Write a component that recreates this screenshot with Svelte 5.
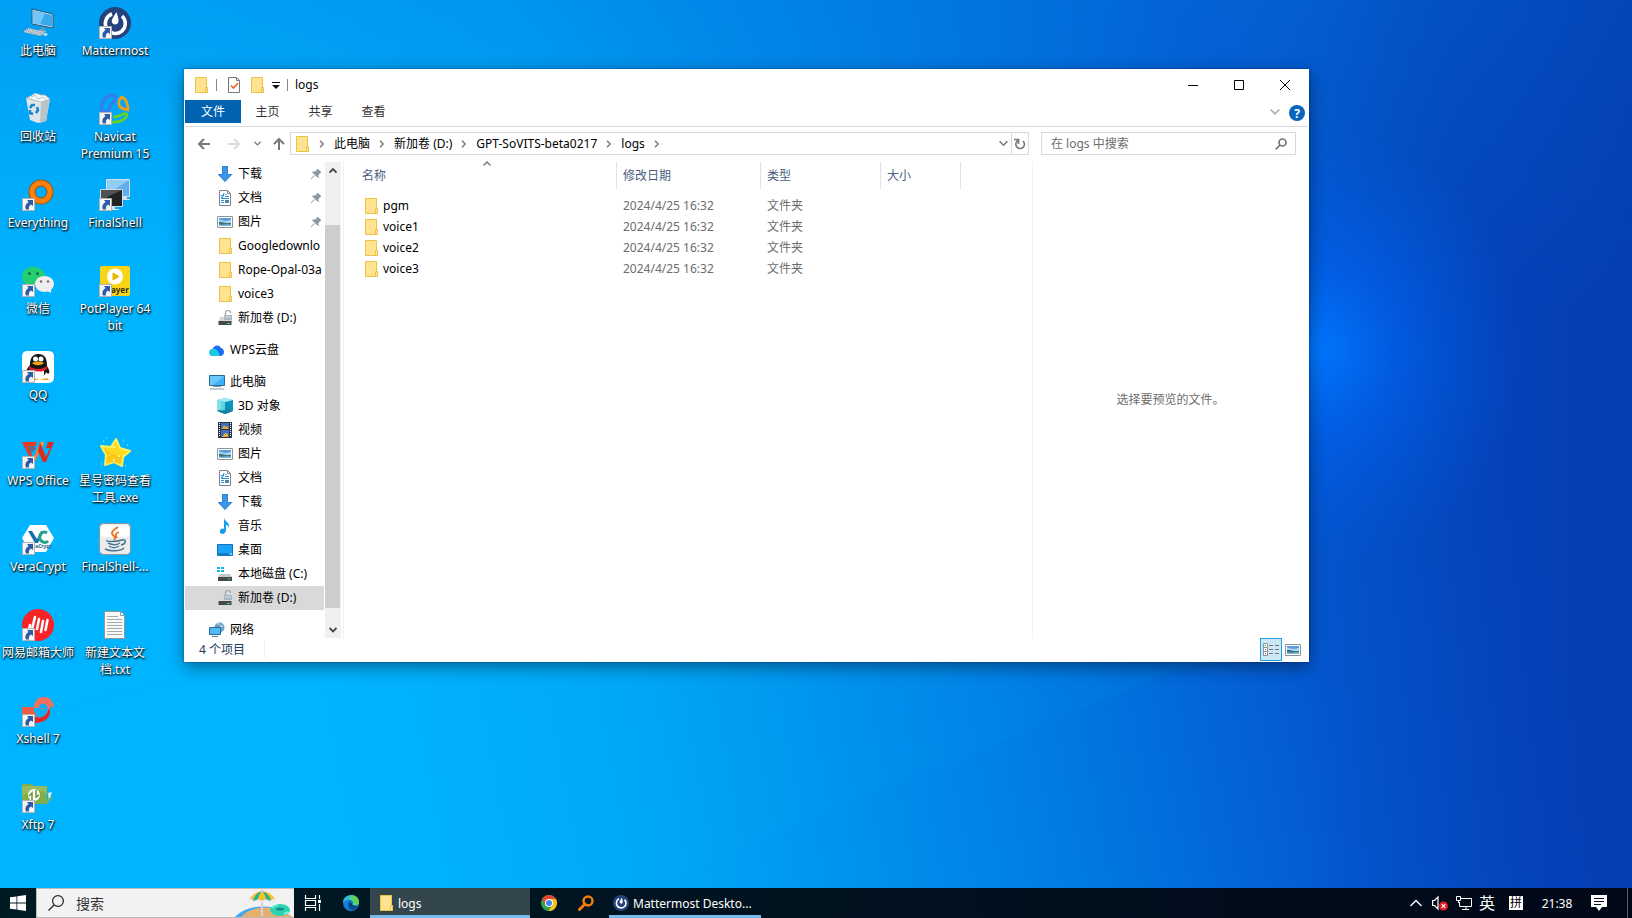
<script>
  const desktopColumns = [
    [
      { icon: 'pc', label: '此电脑' },
      { icon: 'bin', label: '回收站' },
      { icon: 'everything', label: 'Everything', link: true },
      { icon: 'wechat', label: '微信', link: true },
      { icon: 'qq', label: 'QQ', link: true },
      { icon: 'wps', label: 'WPS Office', link: true },
      { icon: 'vera', label: 'VeraCrypt', link: true },
      { icon: 'mail', label: '网易邮箱大师', link: true },
      { icon: 'xshell', label: 'Xshell 7', link: true },
      { icon: 'xftp', label: 'Xftp 7', link: true }
    ],
    [
      { icon: 'mattermost', label: 'Mattermost', link: true },
      { icon: 'navicat', label: 'Navicat Premium 15', link: true },
      { icon: 'finalshell', label: 'FinalShell', link: true },
      { icon: 'potplayer', label: 'PotPlayer 64 bit', link: true },
      null,
      { icon: 'star', label: '星号密码查看工具.exe' },
      { icon: 'java', label: 'FinalShell-...' },
      { icon: 'text', label: '新建文本文档.txt' }
    ]
  ];

  const navGroups = [
    [
      { icon: 'download', label: '下载', pin: true },
      { icon: 'document', label: '文档', pin: true },
      { icon: 'picture', label: '图片', pin: true },
      { icon: 'folder', label: 'Googledownlo' },
      { icon: 'folder', label: 'Rope-Opal-03a' },
      { icon: 'folder', label: 'voice3' },
      { icon: 'lockdrive', label: '新加卷 (D:)' }
    ],
    [{ icon: 'cloud', label: 'WPS云盘', root: true }],
    [
      { icon: 'monitor', label: '此电脑', root: true },
      { icon: 'cube', label: '3D 对象' },
      { icon: 'film', label: '视频' },
      { icon: 'picture', label: '图片' },
      { icon: 'document', label: '文档' },
      { icon: 'download', label: '下载' },
      { icon: 'music', label: '音乐' },
      { icon: 'desktop', label: '桌面' },
      { icon: 'drive', label: '本地磁盘 (C:)' },
      { icon: 'lockdrive', label: '新加卷 (D:)', selected: true }
    ],
    [{ icon: 'network', label: '网络', root: true }]
  ];

  const crumbs = ['此电脑', '新加卷 (D:)', 'GPT-SoVITS-beta0217', 'logs'];
  const files = ['pgm', 'voice1', 'voice2', 'voice3'];
</script>

{#snippet small(name)}
  <svg class="i16" viewBox="0 0 16 16" aria-hidden="true">
    {#if name === 'folder'}
      <path d="M2 .5h12v10h1v5H2z" fill="#ffe391" />
      <path d="M2.5.5h11v10h1v5h-12zM12.500 15v-4.500h1.500" fill="none" stroke="#e9c446" />
    {:else if name === 'download'}
      <path d="M5 0h6v8h4.500L8 16 .5 8H5z" fill="#3d95e8" />
      <path d="M5.500.5h5v8h4L8 15.400 1.500 8.500h4z" fill="none" stroke="#2a7fd0" stroke-width=".8" />
    {:else if name === 'document'}
      <path d="M2.500.5h8l3 3v12h-11z" fill="#fff" stroke="#7c8489" />
      <path d="M10.500.5v3h3" fill="none" stroke="#7c8489" />
      <path d="M4 7.500h1.500L7 3M8 4.500h1.500M4 5.500h3M8 6.500h4M4 8.500h8M4 10.500h3M4 12.500h3" stroke="#2b8fd3" fill="none" />
      <path d="M8 10h4v3H8z" fill="#4a86a8" />
    {:else if name === 'picture'}
      <path d="M.5 2.500h15v11H.5z" fill="#fff" stroke="#8b9399" />
      <path d="M2 4h12v8H2z" fill="#a9d5f3" />
      <path d="M2 4h12v2L8 7 2 5.500z" fill="#5b9bdc" />
      <path d="M2 8c3-1 5 1 7 1h5v3H2z" fill="#387783" />
      <path d="M2 10.500c5 .5 8-.500 12 0V12H2z" fill="#7fb9d8" />
    {:else if name === 'drive'}
      <path d="M0 1h3v2H0zM4 1h3v2H4zM0 4h3v2H0zM4 4h3v2H4z" fill="#19b5f0" />
      <path d="M3 8h10l2 3H1z" fill="#c3c7c9" />
      <path d="M1 11h14v4H1z" fill="#44494c" />
      <path d="M11 12.500h2v1h-2z" fill="#4be04b" />
    {:else if name === 'lockdrive'}
      <path d="M8.500 6V3c0-3.500 5-3.300 5 0" fill="none" stroke="#a0aab1" stroke-width="1.300" />
      <path d="M7 5h8v5H7z" fill="#a9b8c4" />
      <path d="M8 7h6" stroke="#d7e0e6" />
      <path d="M3 7h4v3h8l.5 2h-14z" fill="#d5d8da" />
      <path d="M1.500 11h13v4h-13z" fill="#44494c" />
      <path d="M10 13h3v1h-3z" fill="#4be04b" />
    {:else if name === 'cloud'}
      <path d="M4.500 14a3.500 3.500 0 0 1-1-7C5 3 10 2 12 6c4 1 4 7 0 8z" fill="#1c6df0" />
      <path d="M4.500 14a3.500 3.500 0 0 1-1-7c4-1 6 3 7.500 7z" fill="#19cbe2" />
    {:else if name === 'monitor'}
      <path d="M.5 1.500h15v10H.5z" fill="#3db2f7" stroke="#2b6c94" />
      <path d="M1 2h14L4 11H1z" fill="#6cc8fa" />
      <path d="M4 12.500h8M1 15h14" stroke="#8298a5" />
    {:else if name === 'cube'}
      <path d="M0 2l8-2 8 2v11l-8 3-8-3z" fill="#2db9d0" />
      <path d="M0 2l8 2v12l-8-3z" fill="#83e1ea" />
      <path d="M8 4l8-2v11l-8 3z" fill="#0c94bd" />
      <path d="M0 2l8-2 8 2-8 2z" fill="#a9ecf1" />
      <path d="M8 10l8 3-8 3-8-3z" fill="#147f9f" />
      <path d="M4 3l4 1v8l-4 1z" fill="#5ed3e2" />
    {:else if name === 'film'}
      <path d="M1 0h14v16H1z" fill="#32373b" />
      <path d="M4 1h8v6H4z" fill="#3e6fc4" />
      <path d="M4 8h8v7H4z" fill="#3e6fc4" />
      <path d="M5 7l2-4 2 2 2-1v3zM5 15l3-4 3 1v3z" fill="#e0ad3b" />
      <path d="M2.500 1v14M13.500 1v14" stroke="#fff" stroke-dasharray="1 1" />
    {:else if name === 'music'}
      <path d="M7 0c1 4 6 4 5 10-1-3-2-3-3-3v5c0 5-7 5-6 1 0-2 2-3 4-2z" fill="#159df0" />
    {:else if name === 'desktop'}
      <path d="M.5 2.500h15v11H.5z" fill="#1ba1f5" stroke="#1474b5" />
      <path d="M1 12h11" stroke="#0d5d96" />
      <path d="M13 12h2" stroke="#d7f0ff" />
    {:else if name === 'network'}
      <circle cx="10.500" cy="5.500" r="5" fill="#6b9fc4" />
      <path d="M8 2c3-1 4 2 6 3M10 6c1-2 3-1 4-3" stroke="#c5def0" fill="none" />
      <path d="M.5 5.500h11v7H.5z" fill="#52b9f4" stroke="#2a6c96" />
      <path d="M3 14.500h6" stroke="#5a7b8f" />
    {:else if name === 'task'}
      <path d="M2.500.5h8l3 3v12h-11z" fill="#fff" stroke="#777" />
      <path d="M10.500.5v3h3" fill="none" stroke="#777" />
      <path d="M5 8.500l2.500 2.500L12 6" stroke="#ec6327" stroke-width="1.700" fill="none" />
    {:else if name === 'mattermost'}
      <circle cx="8" cy="8" r="8" fill="#27427a" />
      <path d="M6 3.800a4.800 4.800 0 1 0 5.500.8" fill="none" stroke="#fff" stroke-width="1.600" />
      <path d="M8.800 2.500c.5 2 1.400 4 .8 5.500-.6 1-2.800.9-3-.5C6.500 6 7.800 4.500 8.800 2.500z" fill="#fff" />
    {:else if name === 'edge'}
      <circle cx="8" cy="8" r="8" fill="#1580d4" />
      <path d="M0 7C1-2 15-2 16 7c0 4-5 4-6 2 1-4-4-6-10-2z" fill="#2cc2dd" />
      <path d="M8 0c5 0 8 3 8 7 0 4-5 4-6 2 1-3-1-4-3-4z" fill="#5bd45c" />
      <path d="M5 10c0-3 2-4 4-4-3 2-1 6 3 6l3-1c-3 6-10 5-10-1z" fill="#0d4a9c" />
      <path d="M9.500 7.500c-2 2 0 4 4.500 3.500-3 2-7 0-6-2.500z" fill="#031d2c" />
    {:else if name === 'chrome'}
      <circle cx="8" cy="8" r="8" fill="#2fa34e" />
      <path d="M1.100 4A8 8 0 0 1 14.900 4H8L4.500 10z" fill="#e94335" />
      <path d="M14.900 4A8 8 0 0 1 7.500 16L11.500 10 8 4z" fill="#fbc116" />
      <circle cx="8" cy="8" r="4" fill="#fff" />
      <circle cx="8" cy="8" r="3" fill="#4285f4" />
    {:else if name === 'everything'}
      <path d="M1.500 14.500L7 9" stroke="#f57c08" stroke-width="3" stroke-linecap="round" />
      <circle cx="10" cy="6" r="4.500" fill="none" stroke="#f57c08" stroke-width="2.500" />
    {/if}
  </svg>
{/snippet}

{#snippet large(name)}
  <svg class="i32" viewBox="0 0 32 32" aria-hidden="true">
    {#if name === 'pc'}
      <path d="M10 2l21 5v14l-21-4z" fill="#bfe2f6" stroke="#31566e" />
      <path d="M11 3.500l19 4.500v11.500l-19-3.500z" fill="#39a9ee" />
      <path d="M11 3.500l12 3-5 11-7-1.500z" fill="#72c6f7" />
      <path d="M20 20l3 1v3l-5-1z" fill="#7f939e" />
      <path d="M16 23l8 1.500-2 1.500-9-2z" fill="#dce6eb" />
      <path d="M6 21l17 4-4 4-18-4z" fill="#d3e0e8" stroke="#7391a2" stroke-width=".6" />
      <path d="M5 22.500l16 3.600M3.500 24l16 3.600" stroke="#6f8c9d" stroke-dasharray="1.500 1" />
      <path d="M23 26l3 1-2 2-3-1z" fill="#dce6eb" />
    {:else if name === 'bin'}
      <path d="M4 5l24 1-4 22-8 2-8-3z" fill="#dfe5e8" />
      <path d="M19 9l9-3-4 22-6 2z" fill="#b9c4ca" />
      <path d="M4 5l5-2 4-3 6 2h4l5 4-9 3z" fill="#f8fafa" stroke="#9ca8ae" stroke-width=".7" />
      <path d="M9 5l4-3 3 4 5-2 3 2" fill="none" stroke="#b7c0c5" />
      <path d="M8 15l2-3h3M15 14l1 3-2 3M11 21l-3-1v-3" fill="none" stroke="#1685d8" stroke-width="2.500" />
    {:else if name === 'mattermost'}
      <circle cx="16" cy="16" r="16" fill="#26427b" />
      <path d="M13 7a10 10 0 1 0 10 2" fill="none" stroke="#fff" stroke-width="3.500" />
      <path d="M17.500 5c1 4 3 8 1.500 11-1 2-5 2-6-.5-1-3 2-6 4.500-10.500z" fill="#fff" />
    {:else if name === 'navicat'}
      <path d="M2.500 19C1 8 8 2 14 2.500c5 1 1 7-2 9l-3 7z" fill="none" stroke="#3f78e8" stroke-width="2.800" stroke-linejoin="round" />
      <path d="M21 14c-2-4-1-8 2-10 4 2 6 7 6 13-3-1-5-1-8-3z" fill="none" stroke="#f0a014" stroke-width="2.800" stroke-linejoin="round" />
      <path d="M12 29c8 1 15-2 16-8-5-2-5 3-14 3" fill="none" stroke="#65d02c" stroke-width="2.800" />
    {:else if name === 'everything'}
      <circle cx="19" cy="13" r="9" fill="none" stroke="#a54d05" stroke-width="7" />
      <circle cx="19" cy="13" r="9" fill="none" stroke="#fd800b" stroke-width="5" />
      <path d="M4 28l8-8" stroke="#fd800b" stroke-width="6" />
    {:else if name === 'finalshell'}
      <path d="M7.500.5h23v17h-23z" fill="#5eafec" stroke="#cfe3ef" />
      <path d="M8 1h22L12 13H8z" fill="#91cdf4" />
      <path d="M24 18h4v2h3v1h-8z" fill="#d5dfe5" />
      <path d="M1.500 10.500h22v17h-22z" fill="#202224" stroke="#d5d9dc" />
      <path d="M2 11h21L2 21z" fill="#4f5356" />
      <path d="M11 28h5v2h4v1H8v-1h3z" fill="#dbe1e5" />
    {:else if name === 'wechat'}
      <ellipse cx="11.500" cy="11.500" rx="11.500" ry="9.800" fill="#25cf6f" />
      <path d="M4 19l1 6 6-4z" fill="#25cf6f" />
      <circle cx="7.500" cy="8.500" r="1.500" fill="#126c3b" /><circle cx="15.500" cy="8.500" r="1.500" fill="#126c3b" />
      <ellipse cx="22.500" cy="19" rx="9.500" ry="8" fill="#eee" />
      <path d="M25 26l4 2v-4z" fill="#eee" />
      <circle cx="19" cy="16.500" r="1.300" fill="#747474" /><circle cx="26" cy="16.500" r="1.300" fill="#747474" />
    {:else if name === 'potplayer'}
      <rect x="1" y="1" width="30" height="30" rx="2" fill="#f8d415" />
      <circle cx="16" cy="11.500" r="8" fill="#fff" />
      <path d="M14 8l6 3.500-6 3.500z" fill="#e8b900" stroke="#e8b900" />
      <text x="12" y="28" font-size="8" font-weight="700" fill="#332c08">ayer</text>
    {:else if name === 'qq'}
      <rect width="32" height="32" rx="5" fill="#fff" />
      <path d="M8 24l9 5 8-2 2 2H8z" fill="#f3a315" />
      <path d="M16 3c8 0 9 6 9 12 3 5 3 7 1 8l-2-2c-1 7-16 8-17 0l-2 2c-2-2 0-6 3-9 0-6 2-11 8-11z" fill="#151617" />
      <path d="M10 18h12v6c-2 5-11 5-12 0z" fill="#fff" />
      <circle cx="13.500" cy="8" r="2.500" fill="#fff" /><circle cx="19" cy="8" r="2.500" fill="#fff" />
      <circle cx="14" cy="8" r="1" /><circle cx="18.500" cy="8" r="1" />
      <path d="M10 12c4-2 9-2 12 0-3 3-9 3-12 0z" fill="#f2a20d" />
      <path d="M7 15c5 4 13 4 18 0v3c-4 3-8 3-12 2v4H9v-5l-2-1z" fill="#e51d25" />
    {:else if name === 'wps'}
      <path d="M0 5h15l-2 4H6l7 16h-3z" fill="#e93a20" />
      <path d="M6 9h7l1 3-5 4z" fill="#c7200f" opacity=".5" />
      <path d="M18 5h4l-9 20h-3z" fill="#ff7a2c" />
      <path d="M18 5h4l-3 10z" fill="#ff9b35" />
      <path d="M18 5l6 15 4-9h-4l2-6h6l-8 20h-3l-5-11z" fill="#dd2c1b" />
    {:else if name === 'star'}
      <path d="M17 2l4 9 10 3-7 6-1 9-8-4-9 3 1-10-5-9 10 1z" fill="#ffd820" stroke="#ffee5d" stroke-width="2" stroke-linejoin="round" />
      <path d="M4 11l7 5 12 4-1 8-7-3-8 2 1-9z" fill="#fbb609" opacity=".5" />
      <path d="M4 4h1M7 1h1M24 4h1M28 8h1M26 29h1M2 27h1" stroke="#c9efff" />
      <path d="M14 10h2M10 18h1M19 19h2M14 23h2" stroke="#fffbc2" stroke-width="1.500" />
    {:else if name === 'vera'}
      <path d="M8 2h16l8 13-8 14H8L0 15z" fill="#fff" />
      <path d="M6 8h4l5 8 4-8h3l-6 12h-3z" fill="#1870b3" />
      <path d="M25 10c-6-4-11 6-4 9 2 1 4 0 5-1" fill="none" stroke="#22a38d" stroke-width="3" />
      <text x="11" y="25" font-size="5" font-weight="700" fill="#246587">raCrypt</text>
    {:else if name === 'java'}
      <rect x=".5" y=".5" width="31" height="31" rx="4" fill="#ececec" stroke="#8d9498" />
      <rect x="2" y="2" width="28" height="12" rx="3" fill="#fff" />
      <path d="M19 4c-6 4-8 6-4 9 2 2 1 3 0 4M20 9c-5 2-3 4-2 6" fill="none" stroke="#ec7527" stroke-width="1.800" />
      <path d="M8 17c-2 2 9 2 15 0M9 20c4 2 9 2 12 0M10 23c3 2 7 2 10 0M6 26c6 3 16 2 19-1M23 17c5-1 4 4-1 5" fill="none" stroke="#487592" stroke-width="1.500" />
    {:else if name === 'mail'}
      <circle cx="16" cy="16" r="16" fill="#f92226" />
      <path d="M8 16l-1 4M13 8l-3 12M17 10l-2 10M21 12l-2 11M25.500 11l-2 10" stroke="#fff" stroke-width="2.600" stroke-linecap="round" />
    {:else if name === 'text'}
      <path d="M5.500 2.500h16l4 4v23h-20z" fill="#f8f9f9" stroke="#929799" />
      <path d="M21.500 2.500v4h4" fill="#fff" stroke="#929799" />
      <path d="M8 7.500h11M8 10.500h15M8 13.500h15M8 16.500h15M8 19.500h15M8 22.500h15M8 25.500h15" stroke="#a5a9ac" />
    {:else if name === 'xshell'}
      <path d="M0 12h12c-1 3 1 6 3 8l-2 4H0z" fill="#f05b48" />
      <path d="M12 13C12 5 17 2 22 2c6 0 9 4 10 10h-4c1 9-5 16-14 16h-3l2-6c7 2 13-2 12-9 0-5-7-6-8-1 0 3 4 4 5 1" fill="#f3705c" />
      <path d="M11 28l2-6c6 2 12-1 13-7l2-1c1 9-5 14-17 14z" fill="#e02729" />
      <path d="M14 18c4 4 12 1 11-5-1-4-8-4-7 0 0 3 4 3 4 0" fill="none" stroke="#18a9f5" stroke-width="1.300" />
    {:else if name === 'xftp'}
      <path d="M0 3h10l2 2h13v18H0z" fill="#7fae4b" />
      <path d="M0 5h25v8C17 8 8 10 0 15z" fill="#a2be67" opacity=".7" />
      <path d="M26 12l4-1-3 9z" fill="#e2f2ed" />
      <path d="M24 22l2-4 6-3-7 7z" fill="#7fb63e" />
      <circle cx="12" cy="14" r="6" fill="#fff" />
      <path d="M14 9v7l3-2M10 19v-7l-3 3" fill="none" stroke="#6f9c3d" stroke-width="1.600" />
    {/if}
  </svg>
{/snippet}

{#snippet chevron(dir, size = 8)}
  <svg class="chev" width={size} height={size} viewBox="0 0 8 8" aria-hidden="true">
    {#if dir === 'right'}<path d="M2 .8L5.200 4 2 7.200" />
    {:else if dir === 'down'}<path d="M.5 2L4 5.500 7.500 2" />
    {:else}<path d="M.5 5.500L4 2l3.500 3.500" />{/if}
  </svg>
{/snippet}

<div class="screen">
  <main class="desktop">
    <svg class="wallpaper" viewBox="0 0 1632 888" preserveAspectRatio="none" aria-hidden="true">
      <defs>
        <linearGradient id="base" gradientUnits="userSpaceOnUse" x1="300" y1="560" x2="1500" y2="330">
          <stop offset="0" stop-color="#00b4ff" />
          <stop offset=".25" stop-color="#00a6f7" />
          <stop offset=".55" stop-color="#007ee5" />
          <stop offset=".8" stop-color="#0457d0" />
          <stop offset="1" stop-color="#0547be" />
        </linearGradient>
        <radialGradient id="glow" gradientUnits="userSpaceOnUse" cx="1310" cy="350" r="220">
          <stop offset="0" stop-color="#0078ff" />
          <stop offset=".4" stop-color="#0064f0" stop-opacity=".6" />
          <stop offset="1" stop-color="#0058e0" stop-opacity="0" />
        </radialGradient>
        <linearGradient id="edge" x1="0" x2="1" y1="0" y2="0">
          <stop offset=".8" stop-color="#0333a8" stop-opacity="0" />
          <stop offset="1" stop-color="#0333a8" stop-opacity=".5" />
        </linearGradient>
        <linearGradient id="top" x1="0" x2="0" y1="0" y2="1">
          <stop offset="0" stop-color="#0078e0" stop-opacity=".35" />
          <stop offset=".35" stop-color="#0078e0" stop-opacity="0" />
        </linearGradient>
      </defs>
      <rect width="1632" height="888" fill="url(#base)" />
      <rect width="1632" height="888" fill="url(#top)" />
      <rect width="1632" height="888" fill="url(#edge)" />
      <rect width="1632" height="888" fill="url(#glow)" />
      <path d="M180 0L1300 330V350L340 70z" fill="#13b4ff" opacity=".08" />
      <path d="M0 725L1300 380V620L640 888H0z" fill="#00c0ff" opacity=".05" />
    </svg>

    <div class="shortcuts">
      {#each desktopColumns as column}
        <ul>
          {#each column as item}
            <li>
              {#if item}
                <button class="shortcut">
                  <span class="art">
                    {@render large(item.icon)}
                    {#if item.link}
                      <svg class="arrow" viewBox="0 0 13 13" aria-hidden="true">
                        <path d="M.5.5h12v12H.5z" fill="#f6f6f6" stroke="#b3b3b3" />
                        <path d="M5 2h6v6L9 6.500C7 8 6.500 9 7 11.500H4C2.500 8 4 6 6.500 4z" fill="#2c5ba8" />
                      </svg>
                    {/if}
                  </span>
                  <span class="name">{item.label}</span>
                </button>
              {/if}
            </li>
          {/each}
        </ul>
      {/each}
    </div>

    <section class="window" aria-label="logs">
      <header class="titlebar">
        <div class="quick">
          {@render small('folder')}
          <i class="first"></i>
          <button aria-label="属性">{@render small('task')}</button>
          <button aria-label="新建文件夹">{@render small('folder')}</button>
          <button aria-label="自定义快速访问工具栏">
            <svg width="8" height="8" viewBox="0 0 8 8"><path d="M0 4h8L4 8z" fill="#111" /><path d="M0 1.500h8" stroke="#111" /></svg>
          </button>
          <i></i>
        </div>
        <h1>logs</h1>
        <div class="controls">
          <button aria-label="最小化"><svg viewBox="0 0 10 10"><path d="M0 5.500h10" /></svg></button>
          <button aria-label="最大化"><svg viewBox="0 0 10 10"><path d="M.5.5h9v9h-9z" /></svg></button>
          <button aria-label="关闭"><svg viewBox="0 0 10 10"><path d="M0 0l10 10M10 0L0 10" /></svg></button>
        </div>
      </header>

      <nav class="tabs">
        <button class="file">文件</button>
        <button>主页</button>
        <button>共享</button>
        <button>查看</button>
        <span class="grow"></span>
        <button class="plain pale" aria-label="展开功能区">{@render chevron('down', 10)}</button>
        <button class="help" aria-label="帮助">?</button>
      </nav>

      <div class="location">
        <div class="history">
          <button aria-label="后退"><svg width="12" height="12" viewBox="0 0 12 12"><path d="M12 6H1M6 1L1 6l5 5" stroke="#777" stroke-width="2" /></svg></button>
          <button class="forward" aria-label="前进"><svg width="12" height="12" viewBox="0 0 12 12"><path d="M0 6h11M6 1l5 5-5 5" stroke="#ddd" stroke-width="2" /></svg></button>
          <button class="narrow" aria-label="最近位置">{@render chevron('down', 7)}</button>
          <button class="up" aria-label="上移"><svg width="12" height="12" viewBox="0 0 12 12"><path d="M6 12V1M1 6l5-5 5 5" stroke="#777" stroke-width="2" /></svg></button>
        </div>
        <div class="address">
          {@render small('folder')}
          <span class="sep">{@render chevron('right')}</span>
          {#each crumbs as crumb}
            <button class="crumb">{crumb}</button>
            <span class="sep">{@render chevron('right')}</span>
          {/each}
          <span class="grow"></span>
          <button class="drop" aria-label="以前的位置">{@render chevron('down', 9)}</button>
          <button class="refresh" aria-label="刷新">
            <svg width="12" height="12" viewBox="0 0 12 12"><path d="M4 2.500a4.300 4.300 0 1 0 5 .5M4.500 6V1.500H0" stroke="#777" stroke-width="1.600" /></svg>
          </button>
        </div>
        <label class="search">
          <input type="text" placeholder="在 logs 中搜索" aria-label="在 logs 中搜索" />
          <svg width="12" height="12" viewBox="0 0 12 12"><circle cx="7.500" cy="4.500" r="3.500" stroke="#777" stroke-width="1.700" /><path d="M5 7L.7 11.300" stroke="#777" stroke-width="1.700" /></svg>
        </label>
      </div>

      <div class="body">
        <aside>
          <div class="tree">
            {#each navGroups as group}
              <ul>
                {#each group as item}
                  <li>
                    <button class="node" class:root={item.root} class:selected={item.selected}>
                      {@render small(item.icon)}
                      <span>{item.label}</span>
                      {#if item.pin}
                        <svg class="pin" width="10" height="10" viewBox="0 0 10 10"><path d="M6.500 0L10 3.500 8.500 4 7 6v2.500L1.500 3H4l2-1.500zM3.500 6.500L0 10" fill="#8b99a5" stroke="#8b99a5" stroke-width="1" /></svg>
                      {/if}
                    </button>
                  </li>
                {/each}
              </ul>
            {/each}
          </div>
          <div class="scroll">
            <button aria-label="向上滚动">{@render chevron('up', 8)}</button>
            <span class="track"><span class="thumb"></span></span>
            <button aria-label="向下滚动">{@render chevron('down', 8)}</button>
          </div>
        </aside>

        <div class="files">
          <table>
            <thead>
              <tr>
                <th class="c-name">名称<span class="sort">{@render chevron('up', 8)}</span></th>
                <th class="c-date">修改日期</th>
                <th class="c-type">类型</th>
                <th class="c-size">大小</th>
              </tr>
            </thead>
            <tbody>
              {#each files as file}
                <tr>
                  <td><span class="entry">{@render small('folder')}{file}</span></td>
                  <td>2024/4/25 16:32</td>
                  <td>文件夹</td>
                  <td></td>
                </tr>
              {/each}
            </tbody>
          </table>
        </div>

        <div class="preview">选择要预览的文件。</div>
      </div>

      <footer>
        <span class="count">4 个项目</span>
        <span class="grow"></span>
        <button class="view on" aria-label="详细信息">
          <svg width="18" height="14" viewBox="0 0 18 14"><path d="M1.500.5h4v12h-4zM1.500 4.500h4M1.500 8.500h4" fill="#fff" stroke="#8f9599" /><path d="M7 2.500h4M13 2.500h4M7 6.500h4M13 6.500h4M7 10.500h4M13 10.500h4" stroke="#777" /><path d="M3 2.500h1" stroke="#3c9a4a" /><path d="M3 6.500h1" stroke="#3b76d6" /><path d="M3 10.500h1" stroke="#d33" /></svg>
        </button>
        <button class="view" aria-label="大图标">{@render small('picture')}</button>
      </footer>
    </section>
  </main>

  <div class="taskbar">
    <button class="start" aria-label="开始">
      <svg class="i16" viewBox="0 0 16 16"><path d="M0 2.300l6.500-.9v6.200H0zM7.300 1.300L16 0v7.600H7.300zM0 8.400h6.500v6.200L0 13.700zM7.300 8.400H16V16l-8.700-1.300z" fill="#fff" /></svg>
    </button>
    <label class="tasksearch">
      <svg class="i16" viewBox="0 0 16 16"><circle cx="10" cy="6" r="5.400" stroke="#222" stroke-width="1.200" /><path d="M6 10L.5 15.500" stroke="#222" stroke-width="1.200" /></svg>
      <input type="text" placeholder="搜索" aria-label="搜索" />
      <svg class="beach" viewBox="0 0 59 28" aria-hidden="true">
        <path d="M0 28C10 17 28 15 48 20L40 28z" fill="#43a8f0" />
        <path d="M6 28c8-9 24-13 42-6l10 6z" fill="#e5b06e" />
        <path d="M27 4v23" stroke="#d9cfe3" stroke-width="2" />
        <path d="M14 12C16 6 21 3 27 2c7 1 12 4 13 10z" fill="#f5c32f" />
        <path d="M18 12c1-5 4-8 9-10-3 3-4 6-4 10zM31 12c0-4-1-7-4-10 5 2 8 5 9 10z" fill="#25b48b" />
        <path d="M13 13l3-2 3 2 4-2 4 2 4-2 4 2 3-2 3 2" stroke="#ede7f3" stroke-width="2" />
        <circle cx="27" cy="2" r="1.500" fill="#d9cfe3" />
        <ellipse cx="45" cy="21" rx="10" ry="6" fill="#2bd5b4" />
        <ellipse cx="45" cy="20" rx="4" ry="1.500" fill="#148c85" />
        <path d="M37 19c1-2 4-3 6-3M49 25l4-2" stroke="#86f4df" stroke-width="1.500" />
      </svg>
    </label>
    <button class="t37" aria-label="任务视图">
      <svg width="18" height="16" viewBox="0 0 18 16"><path d="M1.500 0v3.500h10V0M1.500 16v-3.500h10V16M1.500 5.500h10v5h-10zM15.500 0v4M15.500 9v7" stroke="#fff" stroke-width="1.200" /><path d="M14 5h3v3h-3z" fill="#fff" /></svg>
    </button>
    <button class="t39" aria-label="Edge">{@render small('edge')}</button>
    <button class="app active">{@render small('folder')}<span>logs</span></button>
    <button class="t37" aria-label="Chrome">{@render small('chrome')}</button>
    <button class="t37" aria-label="Everything">{@render small('everything')}</button>
    <button class="app running">{@render small('mattermost')}<span>Mattermost Deskto...</span></button>
    <span class="grow"></span>
    <div class="tray">
      <button aria-label="显示隐藏的图标"><svg width="12" height="8" viewBox="0 0 12 8"><path d="M.5 7L6 1.500 11.500 7" stroke="#fff" stroke-width="1.300" /></svg></button>
      <button aria-label="音量">
        <svg class="i16" viewBox="0 0 16 16"><path d="M.6 5.500h2L6 2v12l-3.400-3.500h-2z" stroke="#fff" stroke-width="1.200" /><circle cx="11.500" cy="11" r="4.500" fill="#e01e26" /><path d="M9.700 9.200l3.600 3.600M13.300 9.200l-3.600 3.600" stroke="#fff" stroke-width="1.200" /></svg>
      </button>
      <button aria-label="网络">
        <svg class="i16" viewBox="0 0 16 16"><path d="M5 3.500h10.500v8H3.500V7M10 11.500V14M6 14.500h7M.5 1.500h4v4h-4zM2.500 5.500V8" stroke="#fff" /></svg>
      </button>
      <button class="lang">英</button>
      <button class="ime"><span>拼</span></button>
      <time>21:38</time>
      <button class="note" aria-label="通知">
        <svg class="i16" viewBox="0 0 16 16"><path d="M0 0h16v12h-5l-3 4-3-4H0z" fill="#fff" /><path d="M3 3.500h10M3 6.500h10M3 9.500h7" stroke="#06101e" /></svg>
      </button>
      <button class="peek" aria-label="显示桌面"></button>
    </div>
  </div>
</div>

<style>
  :global(body) { margin: 0; }
  .screen {
    display: flex;
    flex-direction: column;
    height: 100vh;
    overflow: hidden;
    font: 12px/17px "Noto Sans", "Noto Sans CJK SC", sans-serif;
    color: #000;
  }
  button {
    display: flex;
    align-items: center;
    justify-content: center;
    margin: 0;
    padding: 0;
    border: 0;
    background: none;
    color: inherit;
    font: inherit;
    white-space: nowrap;
  }
  input {
    min-width: 0;
    flex: 1;
    padding: 0;
    border: 0;
    outline: 0;
    background: none;
    font: inherit;
  }
  ul { margin: 0; padding: 0; list-style: none; }
  svg { flex: none; display: block; fill: none; }
  .i16 { width: 16px; height: 16px; }
  .i32 { width: 32px; height: 32px; }
  .grow { flex: 1; }
  .chev { stroke: #777; stroke-width: 1.4; }

  .desktop { position: relative; flex: 1; min-height: 0; }
  .wallpaper { position: absolute; inset: 0; width: 100%; height: 100%; }
  .shortcuts { position: relative; display: flex; gap: 1px; width: max-content; }
  .shortcuts li { width: 76px; height: 86px; }
  .shortcut { flex-direction: column; width: 100%; padding-top: 7px; gap: 3px; white-space: normal; }
  .art { position: relative; }
  .arrow { position: absolute; left: 0; bottom: 0; width: 13px; height: 13px; }
  .name {
    width: 76px;
    color: #fff;
    text-align: center;
    text-shadow: 1px 1px 2px #000, 0 1px 2px rgba(0, 0, 0, .8);
    overflow-wrap: anywhere;
  }

  .window {
    position: absolute;
    inset: 69px 323px 226px 184px;
    display: flex;
    flex-direction: column;
    padding: 0 1px;
    background: #fff;
    box-shadow: 0 5px 16px rgba(0, 0, 0, .42), 0 0 2px rgba(0, 30, 90, .5);
  }
  .titlebar { display: flex; align-items: center; height: 31px; }
  .quick { display: flex; align-items: center; gap: 7px; padding-left: 8px; }
  .quick i { width: 1px; height: 12px; background: #888; }
  .quick .first { margin-right: 2px; }
  h1 { margin: 0 auto 0 7px; font: inherit; }
  .controls { display: flex; align-self: stretch; }
  .controls button { width: 46px; }
  .controls svg { width: 10px; height: 10px; stroke: #000; }

  .tabs { display: flex; height: 26px; border-bottom: 1px solid #dadbdc; color: #333; }
  .tabs button { width: 53px; height: 23px; }
  .tabs .file { width: 56px; background: #0063b1; color: #fff; }
  .tabs .plain { width: 24px; }
  .pale :global(.chev) { stroke: #aaa; stroke-width: 1.200; }
  .tabs .help { width: 16px; height: 16px; margin: 5px 3px 0 2px; border-radius: 50%; background: #0a65bd; color: #fff; font-weight: 700; }

  .location { display: flex; align-items: center; height: 33px; padding-bottom: 2px; }
  .history { display: flex; width: 105px; }
  .history button { width: 38px; }
  .history .forward { width: 22px; }
  .history .narrow { width: 24px; }
  .history .up { width: 20px; }
  .address { display: flex; flex: 1; align-items: center; height: 21px; padding-left: 3px; border: 1px solid #d9d9d9; }
  .crumb { padding-bottom: 1px; }
  .sep { display: flex; justify-content: center; width: 24px; }
  .address .drop { width: 16px; }
  .refresh { width: 17px; height: 100%; border-left: 1px solid #d9d9d9; }
  .search { display: flex; align-items: center; width: 236px; height: 21px; margin: 0 12px; padding: 0 8px 0 9px; border: 1px solid #d9d9d9; }
  .search input::placeholder { color: #6d6d6d; opacity: 1; }

  .body { display: flex; flex: 1; min-height: 0; }
  aside { display: flex; width: 158px; border-right: 1px solid #f0f0f0; }
  .tree { width: 139px; overflow: hidden; }
  .tree ul { margin-bottom: 8px; }
  .node { position: relative; justify-content: flex-start; gap: 5px; width: 100%; height: 24px; padding-left: 32px; }
  .node span { padding-bottom: 2px; }
  .node.root { padding-left: 24px; }
  .node.selected { background: #d9d9d9; }
  .pin { position: absolute; right: 3px; }
  .scroll { display: flex; flex-direction: column; width: 16px; margin-left: 1px; background: #f0f0f0; }
  .scroll button { height: 17px; }
  .scroll :global(.chev) { stroke: #444; stroke-width: 1.800; }
  .track { flex: 1; display: flex; padding: 46px 1px 13px 0; }
  .thumb { flex: 1; background: #cdcdcd; }

  .files { flex: 1; min-width: 0; }
  table { width: 617px; table-layout: fixed; border-collapse: separate; border-spacing: 0; }
  th { position: relative; height: 27px; padding: 0 0 0 6px; border-right: 1px solid #e2e2e2; color: #4a5d7d; font-weight: 400; text-align: left; }
  thead::after { content: ""; display: block; height: 6px; }
  td { height: 21px; padding: 0 0 0 6px; color: #6d6d6d; }
  .c-name { width: 254px; padding-left: 18px; }
  td:first-child { padding-left: 19px; color: #000; }
  .c-date { width: 137px; }
  .c-type { width: 113px; }
  .c-size { width: 73px; }
  .sort { position: absolute; top: -2px; left: 139px; }
  .entry { display: flex; align-items: center; gap: 4px; }
  .preview { display: flex; align-items: center; justify-content: center; width: 275px; padding-bottom: 2px; border-left: 1px solid #f3f3f3; color: #6d6d6d; }

  footer { display: flex; align-items: center; height: 23px; padding-bottom: 1px; color: #1e395b; }
  .count { padding: 0 19px 0 14px; border-right: 1px solid #f0f0f0; }
  .view { width: 22px; height: 23px; }
  .view.on { border: 1px solid #26a0da; background: #cce8f6; }
  .view.on + .view { margin-right: 4px; }

  .taskbar { display: flex; height: 30px; background: linear-gradient(90deg, #001a24, #01101e 60%, #020818); color: #fff; }
  .start { width: 36px; }
  .tasksearch { display: flex; align-items: center; width: 246px; padding-left: 11px; border: 1px solid #bbb; border-right-width: 0; background: #f2f2f2; font-size: 14px; gap: 12px; }
  .tasksearch input::placeholder { color: #333; opacity: 1; }
  .beach { width: 59px; height: 28px; }
  .t37 { width: 37px; }
  .t39 { width: 39px; }
  .app { justify-content: flex-start; gap: 4px; padding: 3px 8px 0; border-bottom: 3px solid #76b9ed; }
  .active { width: 160px; background: #33464e; }
  .running { width: 152px; margin-left: 5px; padding: 3px 4px 0; }
  .tray { display: flex; align-items: center; }
  .tray button { width: 24px; height: 100%; }
  .tray .lang { width: 22px; font-size: 16px; }
  .tray .ime { width: 36px; }
  .ime span { width: 14px; height: 14px; background: #fff; color: #000; line-height: 14px; }
  time { width: 46px; text-align: center; }
  .tray .note { width: 38px; padding-right: 0; }
  .tray .peek { width: 5px; margin-left: 9px; border-left: 1px solid #56606a; }
</style>
